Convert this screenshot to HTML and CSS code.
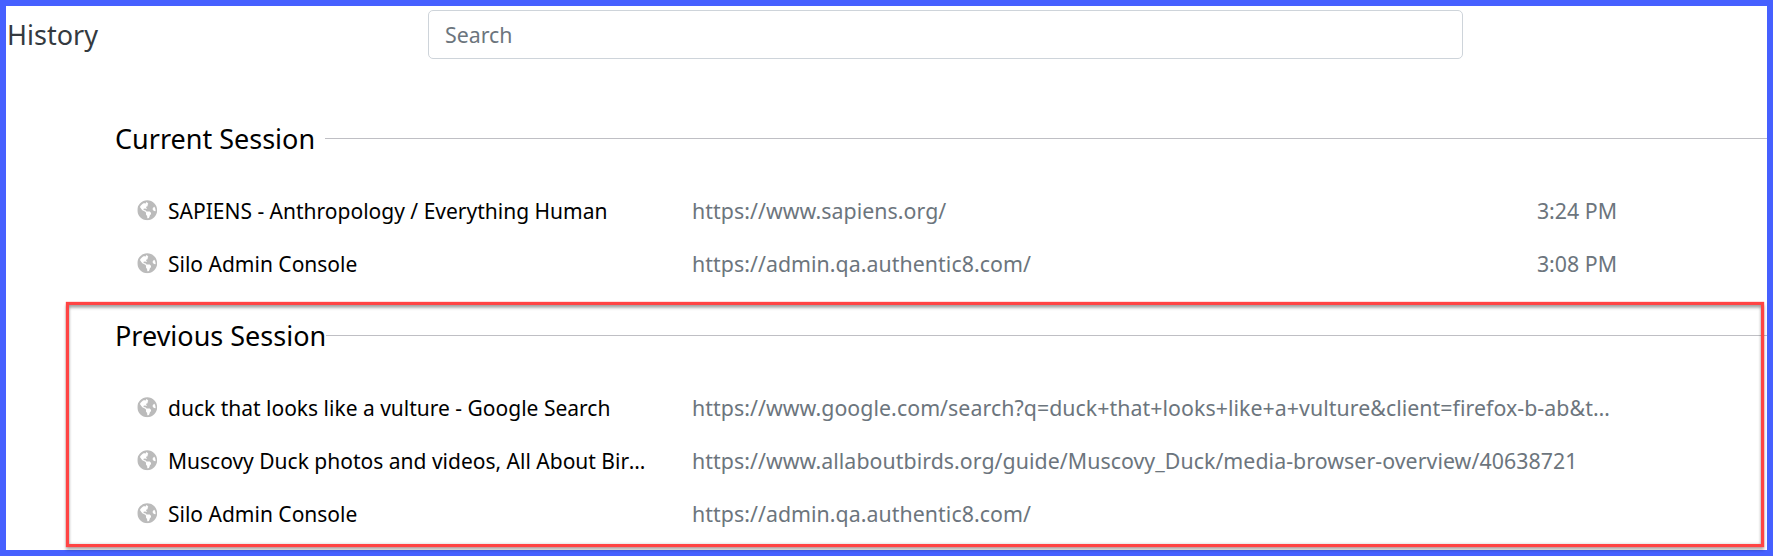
FILE: index.html
```html
<!DOCTYPE html>
<html lang="en">
<head>
    <meta charset="UTF-8">
    <title>History</title>
    <link rel="stylesheet" href="styles.css">
</head>
<body>
    <div class="frame">
        <header class="top-bar">
            <div class="page-title">History</div>
            <input class="search" type="text" placeholder="Search">
        </header>

        <section class="session">
            <div class="session-head"><h2>Current Session</h2><span class="rule"></span></div>
            <div class="row">
                <svg class="globe" viewBox="0 0 496 512"><use href="#globe"></use></svg>
                <div class="title">SAPIENS - Anthropology / Everything Human</div>
                <div class="url">https://www.sapiens.org/</div>
                <div class="time">3:24 PM</div>
            </div>
            <div class="row">
                <svg class="globe" viewBox="0 0 496 512"><use href="#globe"></use></svg>
                <div class="title">Silo Admin Console</div>
                <div class="url">https://admin.qa.authentic8.com/</div>
                <div class="time">3:08 PM</div>
            </div>
        </section>

        <section class="session">
            <div class="session-head"><h2>Previous Session</h2><span class="rule"></span></div>
            <div class="row">
                <svg class="globe" viewBox="0 0 496 512"><use href="#globe"></use></svg>
                <div class="title">duck that looks like a vulture - Google Search</div>
                <div class="url">https://www.google.com/search?q=duck+that+looks+like+a+vulture&amp;client=firefox-b-ab&amp;tbm=isch&amp;source=iu&amp;ictx=1</div>
            </div>
            <div class="row">
                <svg class="globe" viewBox="0 0 496 512"><use href="#globe"></use></svg>
                <div class="title">Muscovy Duck photos and videos, All About Birds, Cornell Lab of Ornithology</div>
                <div class="url">https://www.allaboutbirds.org/guide/Muscovy_Duck/media-browser-overview/40638721</div>
            </div>
            <div class="row">
                <svg class="globe" viewBox="0 0 496 512"><use href="#globe"></use></svg>
                <div class="title">Silo Admin Console</div>
                <div class="url">https://admin.qa.authentic8.com/</div>
            </div>
        </section>

        <!-- annotation drawn over the screenshot -->
        <div class="callout"></div>
    </div>

    <svg class="defs" width="0" height="0">
        <symbol id="globe" viewBox="0 0 496 512">
            <path fill-rule="evenodd" d="M248 8C111.03 8 0 119.03 0 256s111.03 248 248 248 248-111.03 248-248S384.97 8 248 8zm82.29 357.6c-3.9 3.88-7.99 7.95-11.31 11.28-2.99 3-5.1 6.7-6.17 10.71-1.51 5.66-2.73 11.38-4.77 16.87l-17.39 46.85c-13.76 3-28 4.69-42.65 4.69v-27.38c1.69-12.62-7.64-36.26-22.63-51.25-6-6-9.37-14.14-9.37-22.63v-32.01c0-11.64-6.27-22.34-16.46-27.97-14.37-7.95-34.81-19.06-48.81-26.11-11.48-5.78-22.1-13.14-31.65-21.75l-.8-.72a114.792 114.792 0 0 1-18.06-20.74c-9.38-13.77-24.66-36.42-34.59-51.14 20.47-45.5 57.36-82.04 103.2-101.89l24.01 12.01C203.48 89.74 216 82.01 216 70.11v-11.3c7.99-1.29 16.12-2.11 24.45-2.45l28.3 28.3c6.25 6.25 6.25 16.38 0 22.63L264 112l-10.34 10.34c-3.12 3.12-3.12 8.19 0 11.31l4.69 4.69c3.12 3.12 3.12 8.19 0 11.31l-8 8a8.008 8.008 0 0 1-5.66 2.34h-8.99c-2.08 0-4.08.81-5.58 2.27l-9.92 9.65a8.008 8.008 0 0 0-1.58 9.31l15.59 31.19c2.66 5.32-1.21 11.58-7.15 11.58h-5.64c-1.93 0-3.79-.7-5.24-1.96l-9.28-8.06a16.017 16.017 0 0 0-15.55-3.1l-31.17 10.39a11.95 11.95 0 0 0-8.17 11.34c0 4.53 2.56 8.66 6.61 10.69l11.08 5.54c9.41 4.71 19.79 7.16 30.31 7.16s22.59 27.29 32 32h66.75c8.49 0 16.62 3.37 22.63 9.37l13.69 13.69a30.503 30.503 0 0 1 8.93 21.57 46.536 46.536 0 0 1-13.72 32.98zM417 274.25c-5.79-1.45-10.84-5-14.15-9.97l-17.98-26.97a23.97 23.97 0 0 1 0-26.62l19.59-29.38c2.32-3.47 5.5-6.29 9.24-8.15l12.98-6.49C445.01 198.32 456 225.92 456 256c0 8.67-1.04 17.08-2.65 25.34L417 274.25z"></path>
        </symbol>
    </svg>
</body>
</html>
```

FILE: styles.css
```css
html, body {
    margin: 0;
    height: 100%;
    background: #fff;
}

body {
    font-family: 'Noto Sans', sans-serif;
    overflow: hidden;
}

.frame {
    position: relative;
    box-sizing: border-box;
    height: 100vh;
    border: 6px solid #4660ff;
    background: #fff;
}

.top-bar {
    display: flex;
    align-items: center;
    height: 57px;
    margin-bottom: 57px;
    padding-left: 1px;
}

.page-title {
    width: 421px;
    font-size: 27px;
    color: #343a40;
}

.search {
    box-sizing: border-box;
    width: 1035px;
    height: 49px;
    padding: 0 16px;
    border: 1px solid #ced4da;
    border-radius: 5px;
    font-family: inherit;
    font-size: 21.33px;
    color: #495057;
}

.search::placeholder {
    color: #6c757d;
    opacity: 1;
}

.session {
    margin-bottom: 27px;
    padding-left: 109px;
}

.session-head {
    display: flex;
    align-items: center;
    height: 36px;
    margin-bottom: 28px;
}

.session-head h2 {
    min-width: 210px;
    margin: 0;
    font-size: 27px;
    font-weight: 400;
    color: #000;
    white-space: nowrap;
}

.rule {
    flex: 1;
    height: 1px;
    background: #bfbfc4;
}

.row {
    display: flex;
    align-items: center;
    height: 53px;
    padding: 0 150px 0 22px;
    font-size: 21.33px;
}

.globe {
    flex: none;
    width: 20.5px;
    height: 20.5px;
    margin-right: 10.5px;
    fill: #bbb;
}

.title {
    flex: none;
    box-sizing: border-box;
    width: 524px;
    padding-right: 46px;
    font-size: 21px;
    color: #000;
    white-space: nowrap;
    overflow: hidden;
    text-overflow: ellipsis;
}

.url {
    flex: 1;
    min-width: 0;
    letter-spacing: 0.05px;
    color: #6c757d;
    white-space: nowrap;
    overflow: hidden;
    text-overflow: ellipsis;
}

.time {
    flex: none;
    color: #6c757d;
}

.callout {
    position: absolute;
    left: 60px;
    top: 296px;
    width: 1698px;
    height: 245px;
    box-sizing: border-box;
    border: 3px solid #ff4444;
    box-shadow: 0 0 1px #ff4444, 0 3px 3px rgba(0, 0, 0, 0.3), inset 0 3px 3px rgba(0, 0, 0, 0.3), inset 0 0 3px rgba(0, 0, 0, 0.2);
}

.defs {
    position: absolute;
}
```
